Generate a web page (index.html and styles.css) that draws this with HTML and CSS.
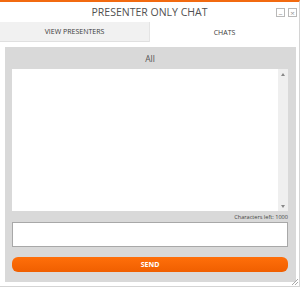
FILE: index.html
```html
<!DOCTYPE html>
<html lang="en">
<head>
    <meta charset="UTF-8">
    <title>Presenter Only Chat</title>
    <link rel="stylesheet" href="styles.css">
</head>
<body>
    <div class="window">
        <div class="title-bar">
            <span class="title">PRESENTER ONLY CHAT</span>
            <div class="win-buttons">
                <span class="win-btn">&#8211;</span>
                <span class="win-btn">&#215;</span>
            </div>
        </div>
        <div class="tabs">
            <div class="tab">VIEW PRESENTERS</div>
            <div class="tab active">CHATS</div>
        </div>
        <div class="panel">
            <div class="panel-header">All</div>
            <div class="messages">
                <div class="msg-list"></div>
                <div class="scrollbar">
                    <span class="arrow up"></span>
                    <span class="arrow down"></span>
                </div>
            </div>
            <div class="chars-left">Characters left: 1000</div>
            <textarea class="chat-input"></textarea>
            <button class="send-btn">SEND</button>
        </div>
        <div class="grip"></div>
    </div>
</body>
</html>
```

FILE: styles.css
```css
* {
    margin: 0;
    padding: 0;
    box-sizing: border-box;
}

body {
    width: 302px;
    height: 289px;
    background: #fff;
    font-family: 'Open Sans', 'Liberation Sans', sans-serif;
}

.window {
    position: relative;
    width: 300px;
    height: 287px;
    border-top: 2px solid #f26a10;
    border-right: 1px solid #d4d4d4;
    border-bottom: 1px solid #d4d4d4;
    display: flex;
    flex-direction: column;
}

.title-bar {
    height: 20px;
    display: flex;
    align-items: center;
    justify-content: center;
    position: relative;
}

.title {
    font-size: 10.5px;
    color: #505050;
}

.win-buttons {
    position: absolute;
    right: 2px;
    top: 6px;
    display: flex;
    gap: 3px;
}

.win-btn {
    width: 9px;
    height: 9px;
    border: 1px solid #b8b8b8;
    color: #999;
    font-size: 8px;
    line-height: 7px;
    text-align: center;
}

.tabs {
    display: flex;
    height: 20px;
}

.tab {
    flex: 1;
    display: flex;
    align-items: center;
    justify-content: center;
    font-size: 7px;
    color: #3a3a3a;
    background: #f1f1f1;
    border-bottom: 1px solid #e0e0e0;
}

.tab.active {
    background: #fff;
    border-bottom: none;
    border-left: 1px solid #e4e4e4;
}

.panel {
    margin: 5px 3px 0 5px;
    height: 235px;
    background: #d9d9d9;
    padding: 0 8px 10px 7px;
    display: flex;
    flex-direction: column;
}

.panel-header {
    height: 22px;
    display: flex;
    align-items: center;
    justify-content: center;
    font-size: 8.5px;
    color: #555;
}

.messages {
    height: 142px;
    background: #fff;
    display: flex;
}

.msg-list {
    flex: 1;
}

.scrollbar {
    width: 10px;
    background: #efefef;
    display: flex;
    flex-direction: column;
    justify-content: space-between;
    align-items: center;
    padding: 4px 0 3px;
}

.arrow {
    width: 0;
    height: 0;
    border-left: 2px solid transparent;
    border-right: 2px solid transparent;
}

.arrow.up {
    border-bottom: 3px solid #888;
}

.arrow.down {
    border-top: 3px solid #888;
}

.chars-left {
    height: 11px;
    font-size: 5.6px;
    color: #444;
    text-align: right;
    line-height: 12px;
}

.chat-input {
    height: 25px;
    border: 1px solid #a8a8a8;
    background: #fff;
    resize: none;
    outline: none;
}

.send-btn {
    margin-top: 10px;
    height: 15px;
    border: none;
    border-radius: 6px;
    background: linear-gradient(#ff6f0a, #f05f00);
    color: #fff;
    font-family: 'Open Sans', 'Liberation Sans', sans-serif;
    font-size: 7px;
    font-weight: 700;
}

.grip {
    position: absolute;
    right: 1px;
    bottom: 1px;
    width: 6px;
    height: 6px;
    background: linear-gradient(135deg, transparent 45%, #aaa 45%, #aaa 55%, transparent 55%, transparent 70%, #aaa 70%, #aaa 80%, transparent 80%);
}
```
